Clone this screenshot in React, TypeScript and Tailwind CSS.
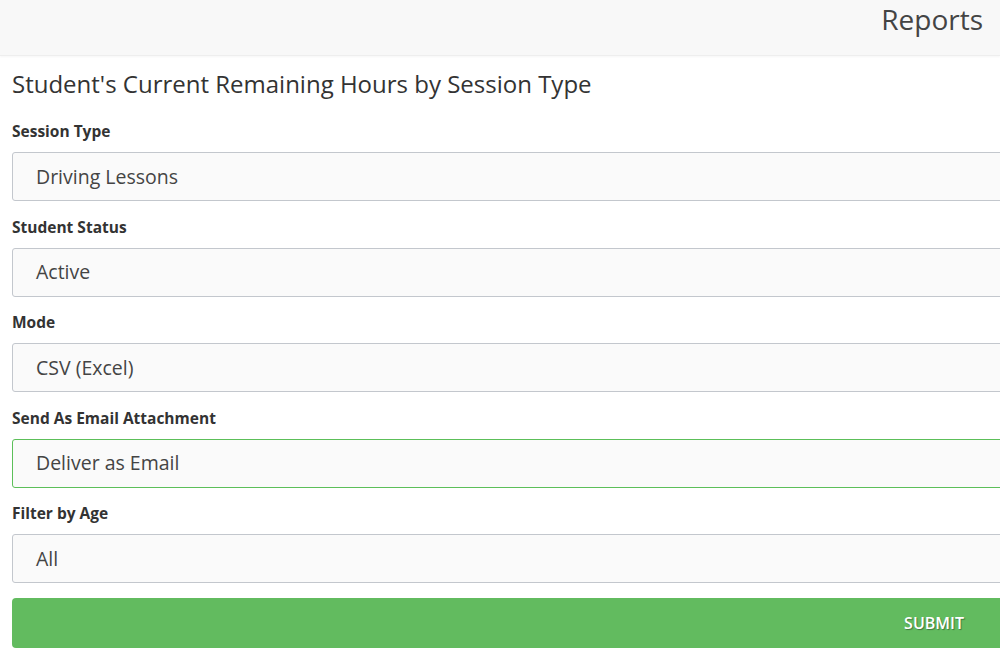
export default function App() {
  const fields: { label: string; value: string; active?: boolean }[] = [
    { label: "Session Type", value: "Driving Lessons" },
    { label: "Student Status", value: "Active" },
    { label: "Mode", value: "CSV (Excel)" },
    { label: "Send As Email Attachment", value: "Deliver as Email", active: true },
    { label: "Filter by Age", value: "All" },
  ];

  return (
    <div
      className="w-[1000px] h-[652px] overflow-hidden bg-white text-[#333]"
      style={{ fontFamily: "'Open Sans', Lato, sans-serif" }}
    >
      {/* Top bar */}
      <header className="h-[56px] bg-[#f8f8f8] border-b border-[#eeeeee] shadow-[0_1px_2px_rgba(0,0,0,0.04)] flex items-start justify-end pr-[17px] pt-[2px]">
        <span className="text-[28px] text-[#444] leading-[34px]">Reports</span>
      </header>

      <main className="pl-[12px] -mr-[20px]">
        <h1 className="text-[24px] text-[#333] leading-none pt-[16px] pb-[26px]">
          Student's Current Remaining Hours by Session Type
        </h1>

        <div className="flex flex-col">
          {fields.map((f) => (
            <div key={f.label} className="flex flex-col">
              <label className="text-[15.5px] font-bold text-[#333] leading-[18px] mb-[12px]">
                {f.label}
              </label>
              <div
                className={`h-[49px] rounded-[3px] border bg-[#fafafa] flex items-center pl-[23px] text-[19.5px] text-[#444] mb-[16.5px] ${
                  f.active ? "border-[#5cbf59]" : "border-[#c3c7cd]"
                }`}
              >
                {f.value}
              </div>
            </div>
          ))}
        </div>

        <button className="w-full h-[50px] rounded-[4px] bg-[#62bb5f] flex items-center justify-end pr-[56px] text-[16px] font-semibold text-white [text-shadow:1px_1px_1px_rgba(0,0,0,0.35)] -mt-[1.5px]">
          SUBMIT
        </button>
      </main>
    </div>
  );
}
